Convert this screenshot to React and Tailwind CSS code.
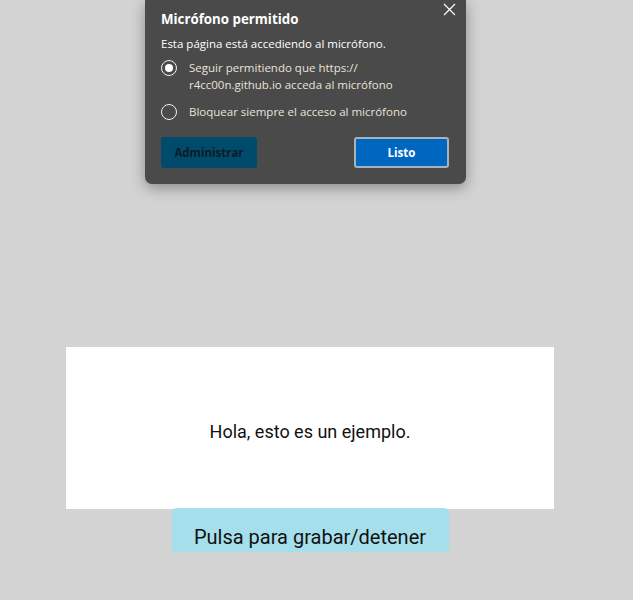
import React from 'react';

const Radio = ({ checked }) => (
  <span className="mt-[1px] flex h-[16px] w-[16px] shrink-0 items-center justify-center rounded-full border-[1.5px] border-[#f0f0f0]">
    {checked && <span className="h-[8px] w-[8px] rounded-full bg-white" />}
  </span>
);

const PermissionPopup = () => (
  <div className="absolute left-[145px] top-0 w-[321px] rounded-b-[7px] bg-[#4a4a4a] px-[16px] pb-[16px] pt-[10px] shadow-[0_4px_14px_rgba(0,0,0,0.35)] font-['Open_Sans',sans-serif]">
    <button className="absolute right-[10px] top-[3px] text-white">
      <svg width="13" height="13" viewBox="0 0 13 13" fill="none" stroke="currentColor" strokeWidth="1.2">
        <path d="M1 1l11 11M12 1L1 12" />
      </svg>
    </button>
    <h3 className="text-[13.3px] font-bold leading-[18px] text-white">Micrófono permitido</h3>
    <p className="mt-[8px] text-[11.5px] leading-[16px] text-white">Esta página está accediendo al micrófono.</p>
    <div className="mt-[7px] flex flex-col gap-[10px]">
      <label className="flex items-start gap-[12px] text-[11.5px] leading-[17px] text-[#e9e4d8]">
        <Radio checked />
        <span>
          Seguir permitiendo que https://
          <br />
          r4cc00n.github.io acceda al micrófono
        </span>
      </label>
      <label className="flex items-start gap-[12px] text-[11.5px] leading-[17px] text-[#e9e4d8]">
        <Radio />
        <span>Bloquear siempre el acceso al micrófono</span>
      </label>
    </div>
    <div className="mt-[17px] flex items-center justify-between">
      <button className="h-[31px] w-[96px] rounded-[3px] bg-[#004b6b] text-[11.5px] font-bold text-[#0d1b26]">
        Administrar
      </button>
      <button className="mr-[1px] h-[31px] w-[95px] rounded-[3px] border-2 border-[#a9b2bb] bg-[#0067c0] text-[11.5px] font-bold text-white">
        Listo
      </button>
    </div>
  </div>
);

export default function App() {
  return (
    <div className="relative min-h-[600px] w-full bg-[#d3d3d3] pt-[347px] font-['Roboto',sans-serif]">
      <PermissionPopup />
      <div className="ml-[66px] w-[488px]">
        <div className="flex h-[162px] items-center justify-center bg-white pt-[6px] text-[18px] text-[#111]">
          Hola, esto es un ejemplo.
        </div>
        <button className="mx-auto -mt-[1px] flex h-[44px] w-[277px] items-center justify-center rounded-t-[5px] bg-[#a6dfec] pt-[13px] text-[20px] text-[#111]">
          Pulsa para grabar/detener
        </button>
      </div>
    </div>
  );
}
